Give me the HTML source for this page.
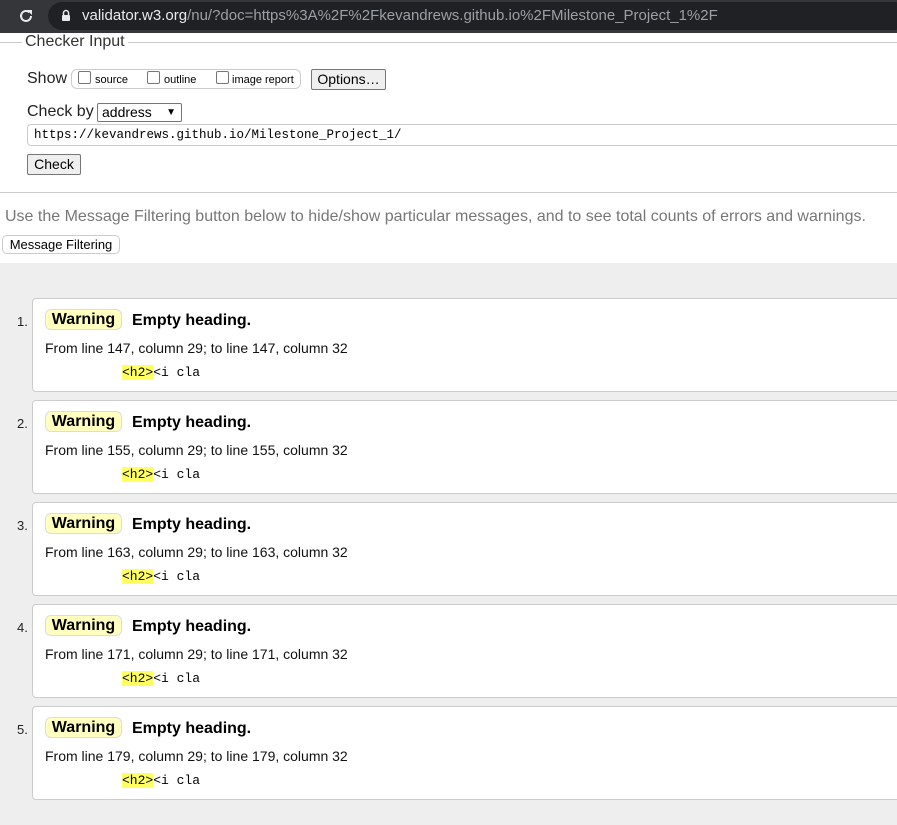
<!DOCTYPE html>
<html><head><meta charset="utf-8"><style>
*{box-sizing:border-box}
body{margin:0;width:897px;height:825px;overflow:hidden;background:#fff;font-family:"Liberation Sans",Arial,sans-serif;position:relative}
.abs{position:absolute}
.bar{left:0;top:0;width:897px;height:33px;background:#35363a}
.omni{left:48px;top:2px;width:860px;height:28px;background:#202124;border-radius:14px}
.url{left:82px;top:7px;font-size:15px;color:#9aa0a6;white-space:nowrap;font-family:"Liberation Sans",sans-serif}
.url b{color:#e8eaed;font-weight:normal}
.btn{background:#efefef;border:1px solid #767676;border-radius:2px;font-size:13px;color:#000;text-align:center}
.card{left:32px;width:880px;height:94px;background:#fff;border:1px solid #ccc;border-radius:4px}
.num{left:17px;font-size:13px;color:#222}
.warn{left:45px;width:77px;height:21px;background:#ffffc0;border:1px solid #ddd;border-radius:6px;font-size:16px;font-weight:bold;text-align:center;line-height:19px}
.title{left:132px;font-size:16px;font-weight:bold}
.loc{left:45px;font-size:14px;color:#111}
.code{left:122px;font-family:"Liberation Mono",monospace;font-size:13px}
.code span{background:#ffff60}
</style></head><body>
<div class="abs bar"></div>
<svg class="abs" style="left:17px;top:7px" width="18" height="18" viewBox="0 0 18 18"><path d="M14 9a5 5 0 1 1-1.5-3.6" fill="none" stroke="#e8eaed" stroke-width="2"/><path d="M10 3h5v5z" fill="#e8eaed"/></svg>
<div class="abs omni"></div>
<svg class="abs" style="left:61px;top:9px" width="10" height="13" viewBox="0 0 10 13"><path d="M2.5 6V4a2.5 2.5 0 0 1 5 0v2" fill="none" stroke="#e8eaed" stroke-width="1.5"/><rect x="1" y="6" width="8" height="6" rx="1" fill="#e8eaed"/></svg>
<div class="abs url"><b>validator.w3.org</b>/nu/?doc=https%3A%2F%2Fkevandrews.github.io%2FMilestone_Project_1%2F</div>

<div class="abs" style="left:0;top:42px;width:897px;height:1px;background:#ccc"></div>
<div class="abs" style="left:22px;top:33px;padding:0 3px;background:#fff;font-size:16px;color:#333">Checker Input</div>

<div class="abs" style="left:27px;top:70px;font-size:16px;color:#222">Show</div>
<div class="abs" style="left:71px;top:69px;width:230px;height:20px;border:1px solid #ccc;border-radius:6px"></div>
<div class="abs" style="left:78px;top:71px;width:13px;height:13px;border:1px solid #767676;border-radius:2px"></div>
<div class="abs" style="left:95px;top:74px;font-size:11px">source</div>
<div class="abs" style="left:147px;top:71px;width:13px;height:13px;border:1px solid #767676;border-radius:2px"></div>
<div class="abs" style="left:164px;top:74px;font-size:11px">outline</div>
<div class="abs" style="left:216px;top:71px;width:13px;height:13px;border:1px solid #767676;border-radius:2px"></div>
<div class="abs" style="left:232px;top:74px;font-size:11px">image report</div>
<div class="abs btn" style="left:311px;top:69px;width:75px;height:21px;font-size:14px;line-height:19px">Options…</div>

<div class="abs" style="left:27px;top:103px;font-size:16px;color:#222">Check by</div>
<div class="abs" style="left:97px;top:103px;width:85px;height:19px;border:1px solid #767676;border-radius:2px;font-size:14px;padding-left:4px;line-height:17px;background:#fff">address<span style="position:absolute;right:5px;top:0;font-size:10px">&#9660;</span></div>
<div class="abs" style="left:27px;top:124px;width:880px;height:22px;border:1px solid #ccc;border-radius:4px;font-family:'Liberation Mono',monospace;font-size:12.5px;padding:3px 0 0 6px;background:#fff">https://kevandrews.github.io/Milestone_Project_1/</div>
<div class="abs btn" style="left:27px;top:154px;width:54px;height:21px;font-size:14px;line-height:19px">Check</div>

<div class="abs" style="left:0;top:192px;width:897px;height:1px;background:#ccc"></div>
<div class="abs" style="left:5px;top:208px;font-size:16px;color:#777;white-space:nowrap">Use the Message Filtering button below to hide/show particular messages, and to see total counts of errors and warnings.</div>
<div class="abs" style="left:2px;top:235px;width:118px;height:19px;border:1px solid #ccc;border-radius:5px;font-size:13px;text-align:center;line-height:17px;background:#fff">Message Filtering</div>

<div class="abs" style="left:0;top:263px;width:897px;height:562px;background:#eee"></div>

<div class="abs card" style="top:298px"></div>
<div class="abs num" style="top:314px">1.</div>
<div class="abs warn" style="top:309px">Warning</div>
<div class="abs title" style="top:312px">Empty heading.</div>
<div class="abs loc" style="top:340px">From line 147, column 29; to line 147, column 32</div>
<div class="abs code" style="top:365px"><span>&lt;h2&gt;</span>&lt;i cla</div>

<div class="abs card" style="top:400px"></div>
<div class="abs num" style="top:416px">2.</div>
<div class="abs warn" style="top:411px">Warning</div>
<div class="abs title" style="top:414px">Empty heading.</div>
<div class="abs loc" style="top:442px">From line 155, column 29; to line 155, column 32</div>
<div class="abs code" style="top:467px"><span>&lt;h2&gt;</span>&lt;i cla</div>

<div class="abs card" style="top:502px"></div>
<div class="abs num" style="top:518px">3.</div>
<div class="abs warn" style="top:513px">Warning</div>
<div class="abs title" style="top:516px">Empty heading.</div>
<div class="abs loc" style="top:544px">From line 163, column 29; to line 163, column 32</div>
<div class="abs code" style="top:569px"><span>&lt;h2&gt;</span>&lt;i cla</div>

<div class="abs card" style="top:604px"></div>
<div class="abs num" style="top:620px">4.</div>
<div class="abs warn" style="top:615px">Warning</div>
<div class="abs title" style="top:618px">Empty heading.</div>
<div class="abs loc" style="top:646px">From line 171, column 29; to line 171, column 32</div>
<div class="abs code" style="top:671px"><span>&lt;h2&gt;</span>&lt;i cla</div>

<div class="abs card" style="top:706px"></div>
<div class="abs num" style="top:722px">5.</div>
<div class="abs warn" style="top:717px">Warning</div>
<div class="abs title" style="top:720px">Empty heading.</div>
<div class="abs loc" style="top:748px">From line 179, column 29; to line 179, column 32</div>
<div class="abs code" style="top:773px"><span>&lt;h2&gt;</span>&lt;i cla</div>
</body></html>
